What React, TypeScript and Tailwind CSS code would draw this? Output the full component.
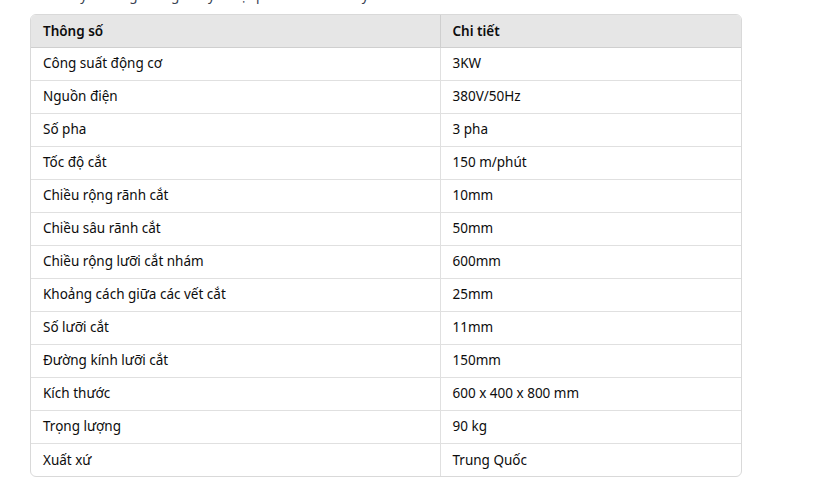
const rows: [string, string][] = [
  ["Công suất động cơ", "3KW"],
  ["Nguồn điện", "380V/50Hz"],
  ["Số pha", "3 pha"],
  ["Tốc độ cắt", "150 m/phút"],
  ["Chiều rộng rãnh cắt", "10mm"],
  ["Chiều sâu rãnh cắt", "50mm"],
  ["Chiều rộng lưỡi cắt nhám", "600mm"],
  ["Khoảng cách giữa các vết cắt", "25mm"],
  ["Số lưỡi cắt", "11mm"],
  ["Đường kính lưỡi cắt", "150mm"],
  ["Kích thước", "600 x 400 x 800 mm"],
  ["Trọng lượng", "90 kg"],
  ["Xuất xứ", "Trung Quốc"],
]

export default function App() {
  return (
    <div className="w-[817px] h-[489px] overflow-hidden bg-white font-['Segoe_UI','Noto_Sans',sans-serif] text-[13.5px] text-[#0d0d0d]">
      <p className="ml-[30px] -mt-[15px] leading-[20px] text-[#374151]">
        Dưới đây là bảng thông số kỹ thuật phổ biến của máy:
      </p>
      <div className="ml-[30px] mt-[9px] w-[712px] rounded-[6px] border border-[#d9d9d9] overflow-hidden">
        <table className="w-full border-collapse">
          <thead>
            <tr className="bg-[#e6e6e6]">
              <th className="h-[32px] w-[409px] border-b border-r border-[#cfcfcf] pl-[12px] text-left font-semibold">Thông số</th>
              <th className="h-[32px] border-b border-[#cfcfcf] pl-[12px] text-left font-semibold">Chi tiết</th>
            </tr>
          </thead>
          <tbody>
            {rows.map(([k, v], i) => (
              <tr key={k} className={i < rows.length - 1 ? "border-b border-[#e0e0e0]" : ""}>
                <td className="h-[33px] border-r border-[#e0e0e0] pl-[12px]">{k}</td>
                <td className="h-[33px] pl-[12px]">{v}</td>
              </tr>
            ))}
          </tbody>
        </table>
      </div>
    </div>
  )
}
